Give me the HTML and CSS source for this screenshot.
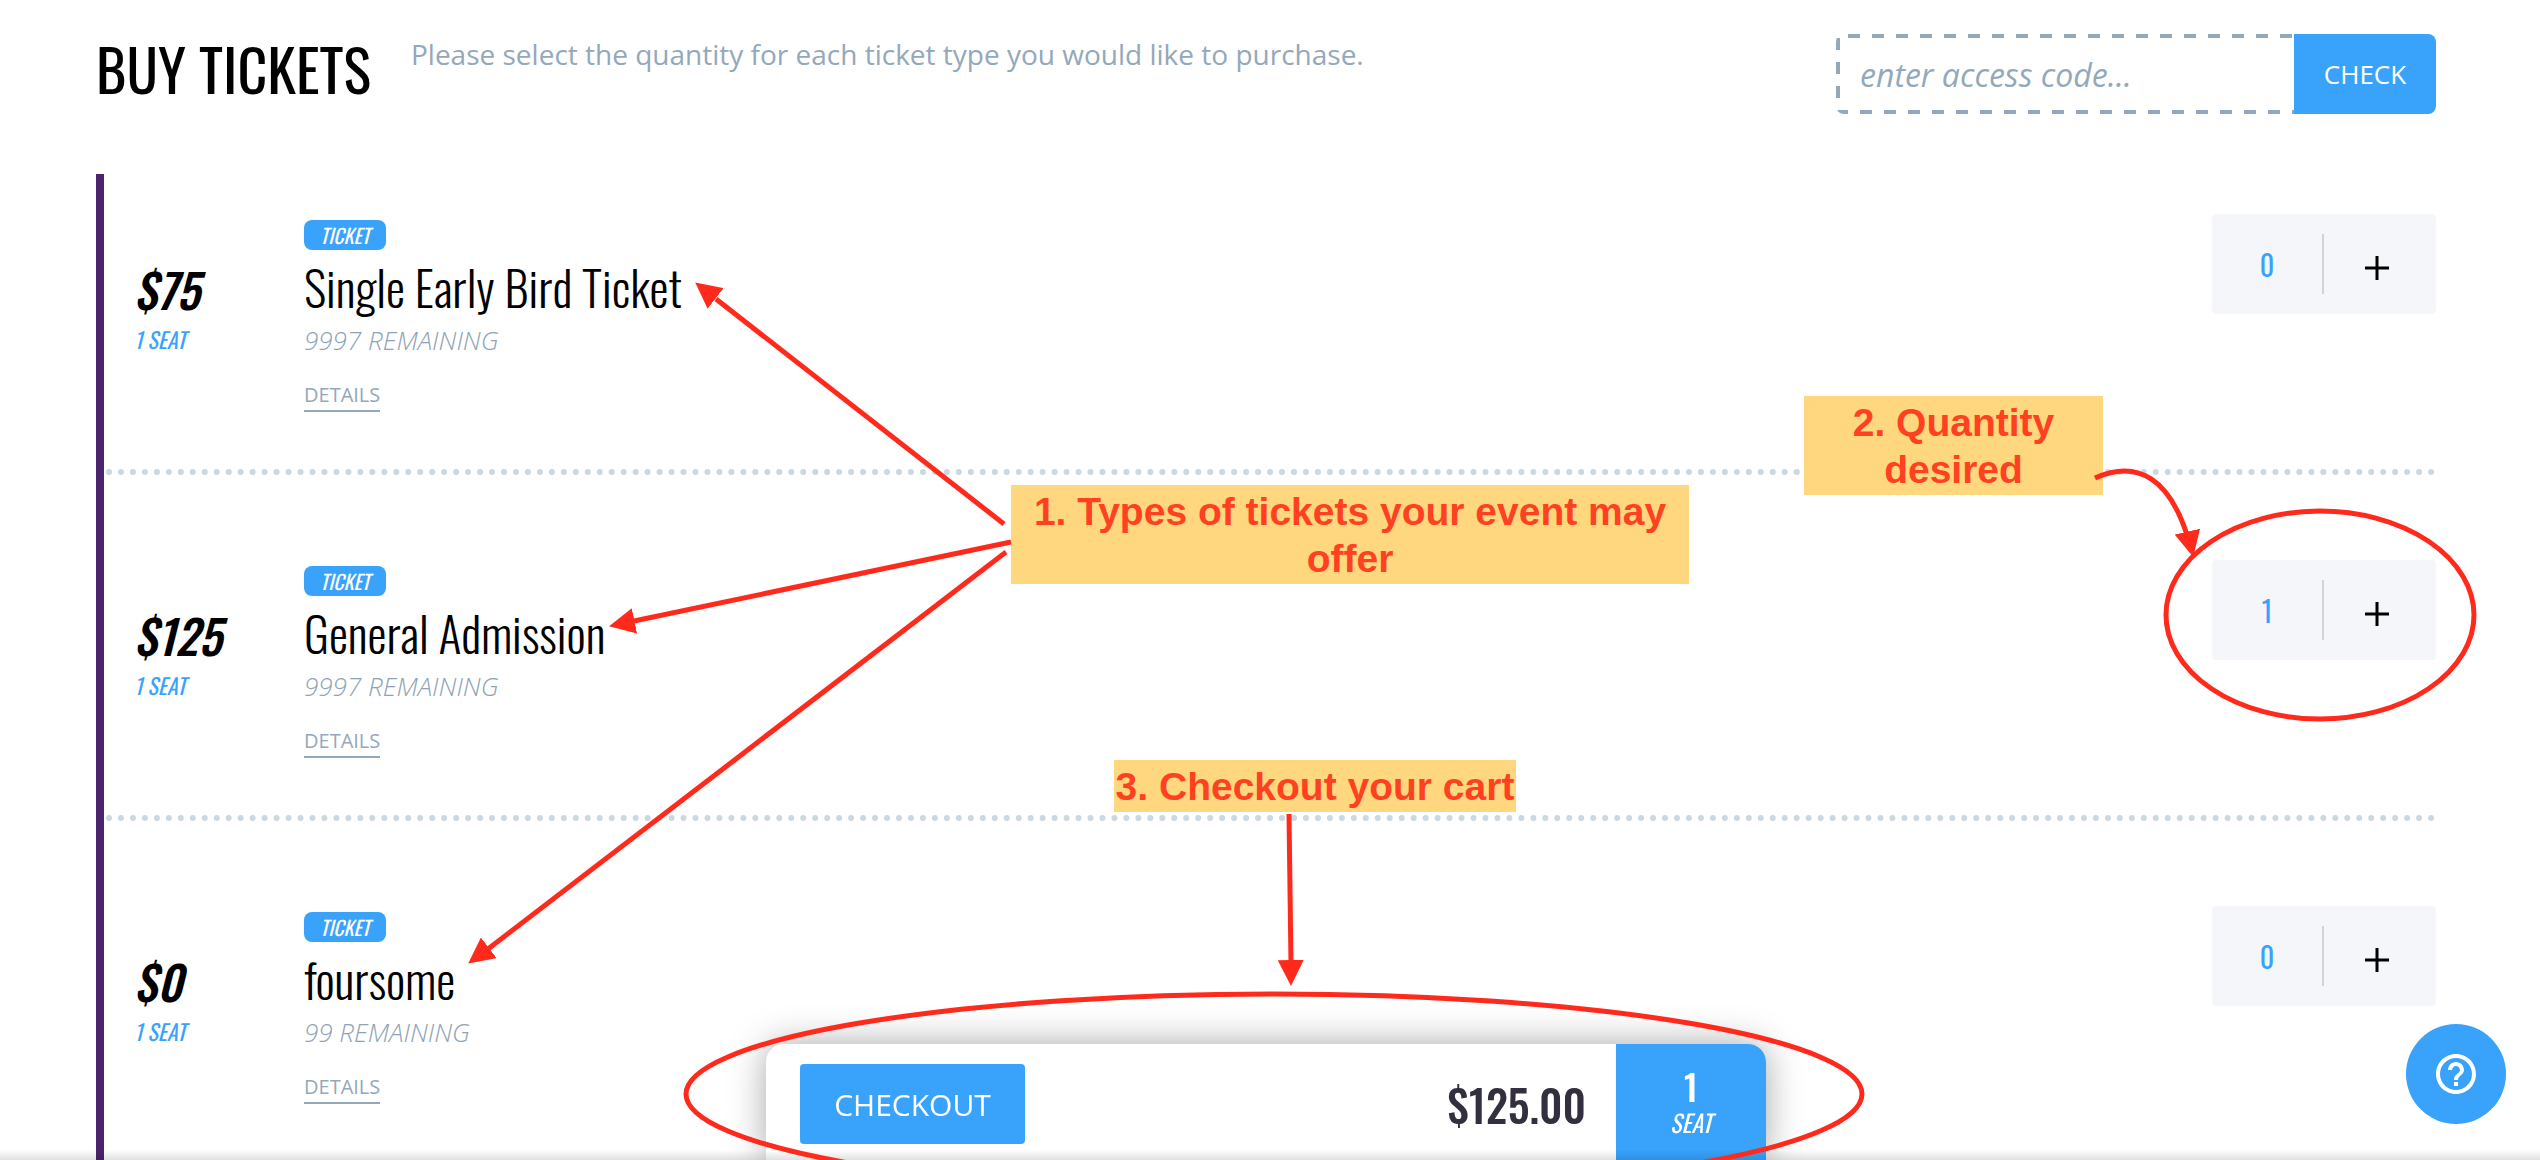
FILE: index.html
```html
<!DOCTYPE html>
<html lang="en">
<head>
    <meta charset="UTF-8">
    <meta name="viewport" content="width=device-width, initial-scale=1.0">
    <title>Buy Tickets</title>
    <link rel="stylesheet" href="styles.css">
</head>
<body>
    <main class="page">
        <header class="header">
            <h1 class="title">BUY TICKETS</h1>
            <p class="subtitle">Please select the quantity for each ticket type you would like to purchase.</p>
            <form class="access">
                <input class="access-input" type="text" placeholder="enter access code..." aria-label="Access code">
                <button class="access-btn" type="button">CHECK</button>
            </form>
        </header>

        <section class="tickets">
            <article class="ticket">
                <div class="price">
                    <p class="amount">$75</p>
                    <p class="seats">1 SEAT</p>
                </div>
                <div class="info">
                    <span class="badge">TICKET</span>
                    <h2 class="name">Single Early Bird Ticket</h2>
                    <p class="remaining">9997 REMAINING</p>
                    <a class="details" href="#">DETAILS</a>
                </div>
                <div class="quantity">
                    <span class="count">0</span>
                    <button class="plus" type="button" aria-label="Add one Single Early Bird Ticket">
                        <svg width="24" height="24" viewBox="0 0 24 24"><path d="M12 0v24M0 12h24"/></svg>
                    </button>
                </div>
            </article>

            <article class="ticket">
                <div class="price">
                    <p class="amount">$125</p>
                    <p class="seats">1 SEAT</p>
                </div>
                <div class="info">
                    <span class="badge">TICKET</span>
                    <h2 class="name">General Admission</h2>
                    <p class="remaining">9997 REMAINING</p>
                    <a class="details" href="#">DETAILS</a>
                </div>
                <div class="quantity">
                    <span class="count">1</span>
                    <button class="plus" type="button" aria-label="Add one General Admission">
                        <svg width="24" height="24" viewBox="0 0 24 24"><path d="M12 0v24M0 12h24"/></svg>
                    </button>
                </div>
            </article>

            <article class="ticket">
                <div class="price">
                    <p class="amount">$0</p>
                    <p class="seats">1 SEAT</p>
                </div>
                <div class="info">
                    <span class="badge">TICKET</span>
                    <h2 class="name">foursome</h2>
                    <p class="remaining">99 REMAINING</p>
                    <a class="details" href="#">DETAILS</a>
                </div>
                <div class="quantity">
                    <span class="count">0</span>
                    <button class="plus" type="button" aria-label="Add one foursome">
                        <svg width="24" height="24" viewBox="0 0 24 24"><path d="M12 0v24M0 12h24"/></svg>
                    </button>
                </div>
            </article>
        </section>
    </main>

    <!-- Cart summary -->
    <div class="cart-bar">
        <div class="cart">
            <button class="checkout" type="button">CHECKOUT</button>
            <p class="total">$125.00</p>
            <div class="cart-seats">
                <span class="cart-count">1</span>
                <span class="cart-label">SEAT</span>
            </div>
        </div>
    </div>

    <button class="help" type="button" aria-label="Help">
        <svg width="48" height="48" viewBox="0 0 24 24"><path d="M11 18h2v-2h-2v2zm1-16C6.48 2 2 6.48 2 12s4.480 10 10 10 10-4.480 10-10S17.520 2 12 2zm0 18c-4.410 0-8-3.590-8-8s3.590-8 8-8 8 3.590 8 8-3.590 8-8 8zm0-14c-2.210 0-4 1.790-4 4h2c0-1.100.9-2 2-2s2 .9 2 2c0 2-3 1.750-3 5h2c0-2.250 3-2.500 3-5 0-2.210-1.790-4-4-4z"/></svg>
    </button>

    <div class="bottom-shade"></div>

    <!-- Guide notes and arrows -->
    <div class="guide">
        <p class="note note-types">1. Types of tickets your event may offer</p>
        <p class="note note-quantity">2. Quantity desired</p>
        <p class="note note-checkout">3. Checkout your cart</p>
        <svg class="arrows" width="2540" height="1160" viewBox="0 0 2540 1160">
            <defs>
                <marker id="head" viewBox="0 0 26 26" refX="25" refY="13" markerWidth="26" markerHeight="26" markerUnits="userSpaceOnUse" orient="auto">
                    <path d="M0 0L26 13L0 26z" fill="#ff2a1b"/>
                </marker>
            </defs>
            <g fill="none" stroke="#ff2a1b" stroke-width="5">
                <path d="M1004 524L716 299"/>
                <path d="M1011 542L634 621"/>
                <path d="M1006 552L488 949"/>
                <path d="M1289 814L1291 963"/>
                <path d="M2095 478C2140 458 2170 482 2187 535"/>
                <ellipse cx="2320" cy="615" rx="154" ry="104"/>
                <ellipse cx="1274" cy="1094" rx="588" ry="100"/>
            </g>
            <g fill="none" stroke="none">
                <path d="M1004 524L696 283" marker-end="url(#head)"/>
                <path d="M1011 542L610 626" marker-end="url(#head)"/>
                <path d="M1006 552L469 963" marker-end="url(#head)"/>
                <path d="M1289 814L1291 985" marker-end="url(#head)"/>
                <path d="M2187 530L2193 556" marker-end="url(#head)"/>
            </g>
        </svg>
    </div>
</body>
</html>
```
FILE: styles.css
```css
* {
    margin: 0;
    padding: 0;
    box-sizing: border-box;
}

body {
    font-family: 'Open Sans', 'Noto Sans', sans-serif;
    height: 100vh;
    overflow: hidden;
    background: #fff;
    color: #000;
    position: relative;
}

button {
    border: none;
    font-family: inherit;
    cursor: pointer;
}

.page {
    padding: 34px 104px 0 96px;
}

.header {
    display: flex;
    align-items: flex-start;
    height: 140px;
}

.title,
.price,
.badge,
.name,
.count,
.total,
.cart-seats {
    font-family: 'Oswald', 'Liberation Sans Narrow', 'Arial Narrow', sans-serif;
}

.title {
    font-size: 58px;
    line-height: 68px;
    font-weight: 400;
}

.subtitle {
    font-size: 28px;
    line-height: 40px;
    margin-left: 40px;
    color: #94a8bb;
}

.access {
    display: flex;
    width: 600px;
    height: 80px;
    margin-left: auto;
}

.access-input {
    flex: 1;
    min-width: 0;
    padding: 0 24px;
    border: none;
    border-radius: 8px 0 0 8px;
    font-family: inherit;
    font-size: 32px;
    font-style: italic;
    background:
        linear-gradient(90deg, #94a8bb 12px, transparent 12px) 12px 0 / 24px 4px repeat-x,
        linear-gradient(90deg, #94a8bb 12px, transparent 12px) 0 100% / 24px 4px repeat-x,
        linear-gradient(#94a8bb 12px, transparent 12px) 0 4px / 4px 24px repeat-y;
}

.access-input::placeholder {
    color: #94a8bb;
}

.access-btn {
    width: 142px;
    border-radius: 0 8px 8px 0;
    background: #39a3fb;
    color: #fff;
    font-size: 26px;
}

.tickets {
    border-left: 8px solid #4b246e;
    padding-left: 2px;
}

.ticket {
    display: flex;
    align-items: flex-start;
    padding: 85px 0 57px;
    border-bottom: 6px dotted #cad8e1;
}

.ticket:first-child {
    padding-top: 40px;
}

.ticket:last-child {
    border-bottom: none;
}

.price {
    width: 198px;
    padding: 44px 0 0 28px;
    font-style: italic;
}

.amount {
    font-size: 47px;
    line-height: 62px;
    font-weight: 500;
}

.seats {
    font-size: 22px;
    line-height: 38px;
    color: #39a3fb;
}

.info {
    flex: 1;
    display: flex;
    flex-direction: column;
    align-items: flex-start;
    padding-top: 6px;
}

.badge {
    padding: 0 16px;
    border-radius: 8px;
    background: #39a3fb;
    color: #fff;
    font-size: 20px;
    line-height: 30px;
    font-style: italic;
}

.name {
    font-size: 48px;
    line-height: 74px;
    font-weight: 300;
}

.remaining {
    font-size: 26px;
    line-height: 32px;
    font-style: italic;
    font-weight: 300;
    color: #8ea3b7;
}

.details {
    margin-top: 26px;
    padding-bottom: 2px;
    border-bottom: 2px solid #94a8bb;
    font-size: 20px;
    line-height: 26px;
    color: #94a8bb;
    text-decoration: none;
}

.quantity {
    display: flex;
    align-items: center;
    width: 224px;
    height: 100px;
    border-radius: 4px;
    background: #f4f6fa;
}

.count {
    flex: 1;
    font-size: 28px;
    text-align: center;
    color: #39a3fb;
}

.plus {
    display: flex;
    align-items: center;
    justify-content: center;
    width: 114px;
    height: 60px;
    padding: 8px 6px 0 0;
    border-left: 2px solid #ced4d8;
    background: none;
}

.plus path {
    stroke: #000;
    stroke-width: 3;
}

.cart-bar {
    position: fixed;
    left: 0;
    right: 8px;
    bottom: 0;
    display: flex;
    justify-content: center;
}

.cart {
    display: flex;
    align-items: center;
    width: 1000px;
    height: 116px;
    padding-left: 34px;
    border-radius: 18px 18px 0 0;
    overflow: hidden;
    background: #fff;
    box-shadow: 0 0 36px rgba(0, 0, 0, 0.35);
}

.checkout {
    width: 225px;
    height: 80px;
    margin-top: 4px;
    border-radius: 4px;
    background: #39a3fb;
    color: #fff;
    font-size: 30px;
}

.total {
    margin-left: auto;
    padding: 4px 30px 0 0;
    font-size: 44px;
    font-weight: 500;
    color: #332f3e;
}

.cart-seats {
    display: flex;
    flex-direction: column;
    align-items: center;
    width: 150px;
    height: 100%;
    padding-top: 22px;
    background: #39a3fb;
    color: #fff;
}

.cart-count {
    font-size: 36px;
    line-height: 40px;
    font-weight: 500;
}

.cart-label {
    font-size: 24px;
    line-height: 32px;
    font-style: italic;
}

.help {
    position: fixed;
    right: 34px;
    bottom: 36px;
    display: flex;
    align-items: center;
    justify-content: center;
    width: 100px;
    height: 100px;
    border-radius: 50%;
    background: #39a3fb;
}

.help path {
    fill: #fff;
}

.bottom-shade {
    position: fixed;
    left: 0;
    right: 0;
    bottom: 0;
    height: 10px;
    background: linear-gradient(rgba(0, 0, 0, 0), rgba(0, 0, 0, 0.12));
}

/* Notes float over the ticket list */
.guide {
    position: absolute;
    top: 0;
    left: 0;
    pointer-events: none;
}

.arrows {
    display: block;
    position: relative;
}

.note {
    position: absolute;
    background: #ffd77e;
    color: #ff4122;
    font-family: 'Liberation Sans', Arial, sans-serif;
    font-size: 39px;
    line-height: 47px;
    font-weight: 700;
    text-align: center;
    padding: 3px 0 2px;
}

.note-types {
    top: 485px;
    left: 1011px;
    width: 678px;
}

.note-quantity {
    top: 396px;
    left: 1804px;
    width: 299px;
    padding: 3px 40px 2px;
}

.note-checkout {
    top: 760px;
    left: 1114px;
    width: 402px;
}
```
